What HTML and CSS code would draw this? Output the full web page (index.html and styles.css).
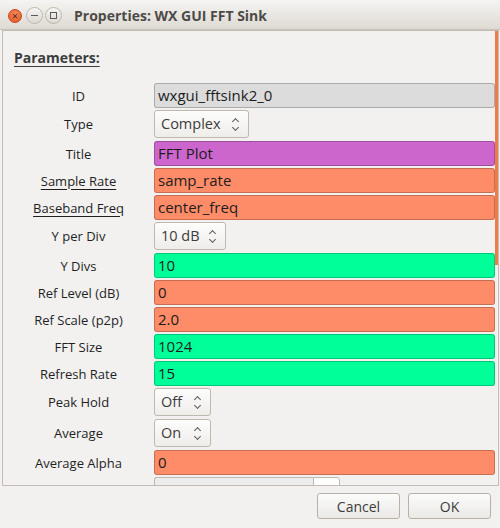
FILE: index.html
```html
<!DOCTYPE html>
<html>
<head>
    <meta charset="UTF-8">
    <title>Properties: WX GUI FFT Sink</title>
    <link rel="stylesheet" href="styles.css">
</head>
<body>
    <div class="titlebar">
        <span class="win-btn close">&#215;</span>
        <span class="win-btn minimize"><span class="min-bar"></span></span>
        <span class="win-btn maximize"><span class="max-box"></span></span>
        <span class="title-text">Properties: WX GUI FFT Sink</span>
    </div>

    <div class="params-frame">
        <div class="scroll-thumb"></div>
        <div class="section-header">Parameters:</div>

        <div class="param-row">
            <div class="param-label">ID</div>
            <div class="entry entry-id">wxgui_fftsink2_0</div>
        </div>
        <div class="param-row combo-row">
            <div class="param-label">Type</div>
            <div class="combo combo-type">Complex<span class="spin"></span></div>
        </div>
        <div class="param-row">
            <div class="param-label">Title</div>
            <div class="entry entry-string">FFT Plot</div>
        </div>
        <div class="param-row">
            <div class="param-label"><u>Sample Rate</u></div>
            <div class="entry entry-float">samp_rate</div>
        </div>
        <div class="param-row">
            <div class="param-label"><u>Baseband Freq</u></div>
            <div class="entry entry-float">center_freq</div>
        </div>
        <div class="param-row combo-row">
            <div class="param-label">Y per Div</div>
            <div class="combo combo-ydiv">10 dB<span class="spin"></span></div>
        </div>
        <div class="param-row">
            <div class="param-label">Y Divs</div>
            <div class="entry entry-int">10</div>
        </div>
        <div class="param-row">
            <div class="param-label">Ref Level (dB)</div>
            <div class="entry entry-float">0</div>
        </div>
        <div class="param-row">
            <div class="param-label">Ref Scale (p2p)</div>
            <div class="entry entry-float">2.0</div>
        </div>
        <div class="param-row">
            <div class="param-label">FFT Size</div>
            <div class="entry entry-int">1024</div>
        </div>
        <div class="param-row">
            <div class="param-label">Refresh Rate</div>
            <div class="entry entry-int">15</div>
        </div>
        <div class="param-row combo-row">
            <div class="param-label">Peak Hold</div>
            <div class="combo combo-small">Off<span class="spin"></span></div>
        </div>
        <div class="param-row combo-row">
            <div class="param-label">Average</div>
            <div class="combo combo-small">On<span class="spin"></span></div>
        </div>
        <div class="param-row">
            <div class="param-label">Average Alpha</div>
            <div class="entry entry-float">0</div>
        </div>
        <div class="param-row combo-row">
            <div class="param-label">Window</div>
            <div class="combo-entry">
                <div class="combo-entry-text">Automatic</div>
                <div class="combo-entry-button"></div>
            </div>
        </div>
    </div>

    <div class="dialog-actions">
        <button class="dialog-button">Cancel</button>
        <button class="dialog-button">OK</button>
    </div>
</body>
</html>
```

FILE: styles.css
```css
:root {
    --window-bg: #f2f1f0;
    --text-color: #3c3c3c;
    --border-color: #c3bcb3;
    --float-color: #ff8c69;
    --int-color: #00ff99;
    --string-color: #cc66cc;
    --id-color: #dcdcdc;
}

* {
    box-sizing: border-box;
}

body {
    margin: 0;
    width: 500px;
    height: 528px;
    overflow: hidden;
    background-color: var(--window-bg);
    color: var(--text-color);
    font-family: "Open Sans", "DejaVu Sans", sans-serif;
}

.titlebar {
    height: 30px;
    display: flex;
    align-items: center;
    padding: 2px 0 0 8px;
    background: linear-gradient(#f5f4f2, #dedad3);
    border-bottom: 1px solid #c9c2b8;
    border-radius: 5px 5px 0 0;
}

.win-btn {
    display: flex;
    align-items: center;
    justify-content: center;
    border-radius: 50%;
    flex-shrink: 0;
}

.close {
    width: 14px;
    height: 14px;
    background: radial-gradient(circle at 50% 35%, #f68a5e, #e2531f);
    border: 1px solid #c7471b;
    color: #5a2411;
    font-size: 11px;
    line-height: 1;
    margin-right: 4px;
}

.minimize,
.maximize {
    width: 17px;
    height: 17px;
    background: linear-gradient(#f7f6f4, #dcd8d2);
    border: 1px solid #bdb6ad;
}

.minimize {
    margin-right: 2px;
}

.min-bar {
    width: 7px;
    height: 1px;
    background-color: #5a5a5a;
}

.max-box {
    width: 7px;
    height: 7px;
    border: 1px solid #5a5a5a;
}

.title-text {
    margin-left: 12px;
    font-size: 14px;
    font-weight: 700;
    color: #4d4b48;
}

.params-frame {
    position: relative;
    height: 456px;
    margin: 0 1px 0 2px;
    padding-right: 3px;
    border: 1px solid var(--border-color);
    overflow: hidden;
}

.scroll-thumb {
    position: absolute;
    top: 0;
    right: 0;
    width: 3px;
    height: 234px;
    background-color: #ef7a4c;
}

.section-header {
    height: 52px;
    padding: 17px 0 0 11px;
    font-size: 14px;
    font-weight: 700;
    text-decoration: underline;
    text-underline-offset: 3px;
    color: #3c3c3c;
}

.param-row {
    display: flex;
    align-items: center;
    height: 25px;
    margin-bottom: 2px;
}

.combo-row {
    height: 28px;
    margin-bottom: 3px;
}

.param-label {
    width: 151px;
    flex-shrink: 0;
    text-align: center;
    font-size: 13px;
    color: #1f1f1f;
}

.param-label u {
    text-underline-offset: 3px;
}

.entry {
    flex: 1;
    height: 25px;
    padding-left: 3px;
    border: 1px solid rgba(0, 0, 0, 0.22);
    border-radius: 3px;
    font-size: 15px;
    line-height: 23px;
    color: #1c1c1c;
}

.entry-id {
    background-color: var(--id-color);
}

.entry-string {
    background-color: var(--string-color);
}

.entry-float {
    background-color: var(--float-color);
}

.entry-int {
    background-color: var(--int-color);
}

.combo {
    position: relative;
    height: 28px;
    padding-left: 6px;
    border: 1px solid #bfb8af;
    border-radius: 3px;
    background: linear-gradient(#fdfdfc, #efedea);
    font-size: 14.5px;
    line-height: 26px;
    color: #3c3c3c;
}

.combo-type {
    width: 95px;
}

.combo-ydiv {
    width: 72px;
}

.combo-small {
    width: 57px;
}

/* small up/down chevrons of a GTK combo */
.spin {
    position: absolute;
    right: 9px;
    top: 7px;
    width: 7px;
    height: 13px;
}

.spin:before,
.spin:after {
    content: "";
    position: absolute;
    left: 1px;
    width: 4px;
    height: 4px;
    border-left: 1px solid #5c5c5c;
    border-top: 1px solid #5c5c5c;
}

.spin:before {
    top: 1px;
    transform: rotate(45deg);
}

.spin:after {
    bottom: 1px;
    transform: rotate(225deg);
}

.combo-entry {
    display: flex;
    height: 28px;
    width: 186px;
}

.combo-entry-text {
    width: 159px;
    padding-left: 6px;
    border: 1px solid #bfb8af;
    border-right: none;
    border-radius: 3px 0 0 3px;
    background-color: #ececec;
    font-size: 14.5px;
    line-height: 26px;
    color: #3c3c3c;
}

.combo-entry-button {
    flex: 1;
    border: 1px solid #bfb8af;
    border-radius: 0 3px 3px 0;
    background-color: #fdfdfc;
}

.dialog-actions {
    display: flex;
    justify-content: flex-end;
    gap: 8px;
    padding: 7px 9px 0 0;
}

.dialog-button {
    width: 83px;
    height: 26px;
    border: 1px solid #b9b1a7;
    border-radius: 3px;
    background: linear-gradient(#fbfbfa, #ebe9e6);
    font-family: "Open Sans", "DejaVu Sans", sans-serif;
    font-size: 14px;
    color: #3c3c3c;
}
```
